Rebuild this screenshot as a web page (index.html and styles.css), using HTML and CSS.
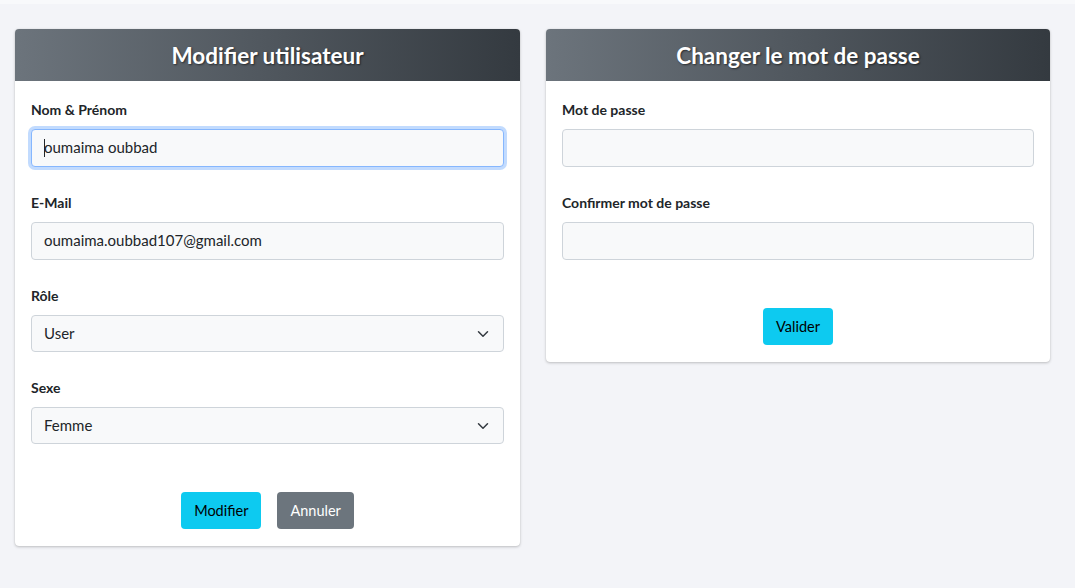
FILE: index.html
```html
<!DOCTYPE html>
<html lang="fr">
<head>
<meta charset="utf-8">
<title>Utilisateur</title>
<link rel="stylesheet" href="styles.css">
</head>
<body>
<div class="topband"></div>
<main class="page">
  <section class="card card-left">
    <header class="card-header"><h2>Modifier utilisateur</h2></header>
    <form class="card-body">
      <div class="group">
        <label class="label">Nom &amp; Prénom</label>
        <div class="control focused"><span class="caret"></span>oumaima oubbad</div>
      </div>
      <div class="group">
        <label class="label">E-Mail</label>
        <div class="control">oumaima.oubbad107@gmail.com</div>
      </div>
      <div class="group">
        <label class="label">Rôle</label>
        <div class="control select">User
          <svg class="chev" viewBox="0 0 16 16" width="16" height="12"><path d="m2 5 6 6 6-6" fill="none" stroke="#343a40" stroke-width="2" stroke-linecap="round" stroke-linejoin="round"/></svg>
        </div>
      </div>
      <div class="group">
        <label class="label">Sexe</label>
        <div class="control select">Femme
          <svg class="chev" viewBox="0 0 16 16" width="16" height="12"><path d="m2 5 6 6 6-6" fill="none" stroke="#343a40" stroke-width="2" stroke-linecap="round" stroke-linejoin="round"/></svg>
        </div>
      </div>
      <div class="actions">
        <button type="button" class="btn btn-info">Modifier</button>
        <button type="button" class="btn btn-secondary">Annuler</button>
      </div>
    </form>
  </section>
  <section class="card card-right">
    <header class="card-header"><h2>Changer le mot de passe</h2></header>
    <form class="card-body">
      <div class="group">
        <label class="label">Mot de passe</label>
        <div class="control"></div>
      </div>
      <div class="group">
        <label class="label">Confirmer mot de passe</label>
        <div class="control"></div>
      </div>
      <div class="actions">
        <button type="button" class="btn btn-info">Valider</button>
      </div>
    </form>
  </section>
</main>
</body>
</html>
```
FILE: styles.css
```css
* { box-sizing: border-box; }
html, body { margin: 0; padding: 0; }
body {
  background: #f3f4f8;
  font-family: "Lato", "Noto Sans", sans-serif;
  color: #212529;
  font-size: 14px;
  height: 588px;
  overflow: hidden;
}
.topband { height: 4px; background: #f8f9fb; }
.page {
  display: flex;
  align-items: flex-start;
  gap: 26px;
  padding: 25px 0 0 15px;
}
.card {
  background: #fff;
  border-radius: 4px;
  box-shadow: 0 1px 3px rgba(0,0,0,.22), 0 0 1px rgba(0,0,0,.15);
  overflow: hidden;
}
.card-left { width: 505px; }
.card-right { width: 504px; }
.card-header {
  height: 52px;
  display: flex;
  align-items: center;
  justify-content: center;
  background: linear-gradient(to right, #6c747c, #343a40);
}
.card-header h2 {
  margin: 0;
  color: #fff;
  font-size: 22.5px;
  font-weight: 700;
  text-shadow: 1px 1px 2px rgba(0,0,0,.55);
}
.card-body {
  padding: 18px 16px 17px;
}
.group { margin-bottom: 25px; }
.group:last-of-type { margin-bottom: 0; }
.label {
  display: block;
  font-weight: 700;
  line-height: 21px;
  margin-bottom: 9px;
  color: #212529;
}
.control {
  position: relative;
  height: 38px;
  padding: 0 12px 2px;
  display: flex;
  align-items: center;
  background: #f8f9fa;
  border: 1px solid #ced4da;
  border-radius: 4px;
  color: #212529;
  font-size: 15px;
}
.control.select { height: 37px; }
.control.focused {
  border-color: #86b7fe;
  box-shadow: 0 0 0 3px rgba(13,110,253,.25);
}
.caret {
  position: absolute;
  left: 12px;
  top: 9px;
  width: 1px;
  height: 18px;
  background: #212529;
}
.chev {
  position: absolute;
  right: 12px;
  top: 12px;
}
.actions {
  display: flex;
  justify-content: center;
  gap: 16px;
  margin-top: 48px;
}
.btn {
  font-family: inherit;
  font-size: 14.5px;
  line-height: 21px;
  padding: 7px 12px;
  border: 1px solid transparent;
  border-radius: 4px;
  cursor: pointer;
}
.btn-info { background: #0dcaf0; color: #000; }
.btn-secondary { background: #6c757d; color: #fff; }
```
